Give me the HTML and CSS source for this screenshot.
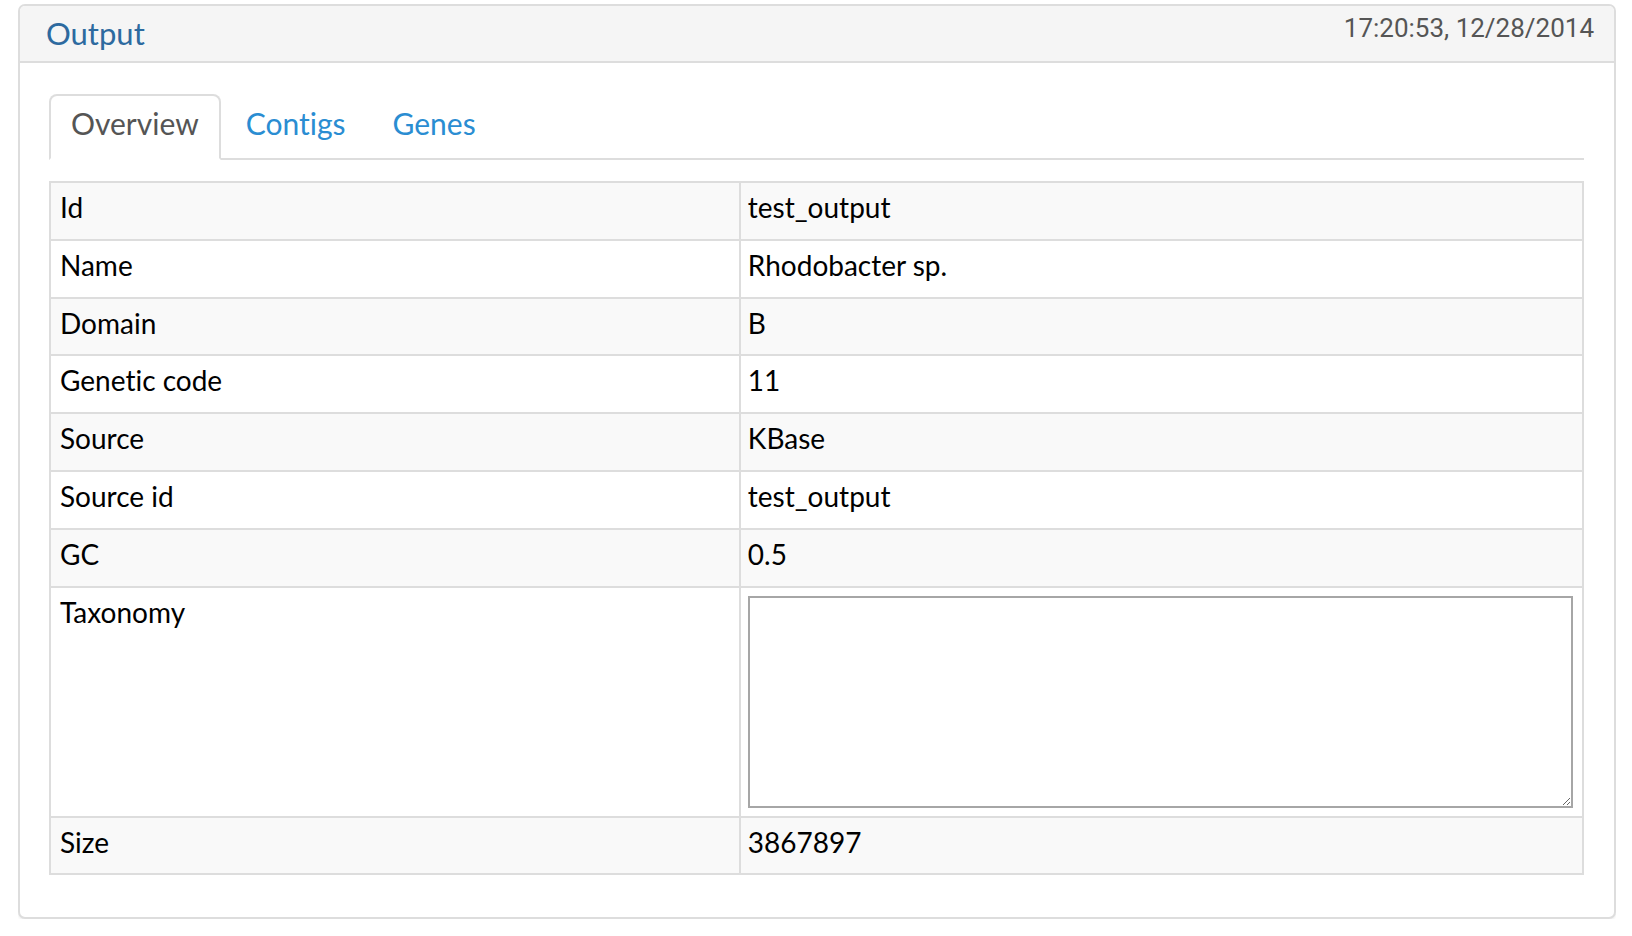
FILE: index.html
```html
<!DOCTYPE html>
<html lang="en">
<head>
<meta charset="utf-8">
<title>Output</title>
<link rel="stylesheet" href="styles.css">
</head>
<body>
<div class="panel">
  <div class="panel-heading">
    <div class="panel-title">Output</div>
    <div class="timestamp">17:20:53, 12/28/2014</div>
  </div>
  <div class="panel-body">
    <ul class="tabs">
      <li class="tab active"><a>Overview</a></li>
      <li class="tab"><a>Contigs</a></li>
      <li class="tab"><a>Genes</a></li>
    </ul>
    <table class="info">
      <colgroup><col class="col-label"><col class="col-value"></colgroup>
      <tbody>
        <tr><td>Id</td><td>test_output</td></tr>
        <tr><td>Name</td><td>Rhodobacter sp.</td></tr>
        <tr><td>Domain</td><td>B</td></tr>
        <tr><td>Genetic code</td><td>11</td></tr>
        <tr><td>Source</td><td>KBase</td></tr>
        <tr><td>Source id</td><td>test_output</td></tr>
        <tr><td>GC</td><td>0.5</td></tr>
        <tr><td>Taxonomy</td><td class="cell-area"><textarea class="taxonomy"></textarea></td></tr>
        <tr><td>Size</td><td>3867897</td></tr>
      </tbody>
    </table>
  </div>
</div>
</body>
</html>
```

FILE: styles.css
```css
html, body {
  background: #ffffff;
}
body {
  margin: 4px 16px 0 18px;
  font-family: Lato, "Open Sans", sans-serif;
  font-variant-ligatures: none;
  color: #000;
}
.panel {
  border: 2px solid #dddddd;
  border-radius: 7px;
  background: #fff;
  box-shadow: 0 2px 2px rgba(0, 0, 0, 0.05);
  overflow: hidden;
}
.panel-heading {
  display: flex;
  justify-content: space-between;
  align-items: flex-start;
  background: #f5f5f5;
  border-bottom: 2px solid #dddddd;
  padding: 7px 20px 8px 26px;
}
.panel-title {
  font-family: Lato, sans-serif;
  font-size: 31px;
  line-height: 40px;
  color: #2d6a9f;
}
.timestamp {
  font-family: Roboto, sans-serif;
  font-size: 26px;
  line-height: 30px;
  color: #555555;
}
.panel-body {
  padding: 31px 30px 42px 29px;
}
.tabs {
  list-style: none;
  margin: 0 0 21px 0;
  padding: 0;
  display: flex;
  border-bottom: 2px solid #dddddd;
}
.tab {
  margin: 0 3px -2px 0;
}
.tab a {
  display: block;
  padding: 7px 20px 14px 20px;
  line-height: 41px;
  font-size: 30px;
  color: #2a8dd2;
  border: 2px solid transparent;
  border-radius: 8px 8px 0 0;
}
.tab.active a {
  color: #555555;
  background: #fff;
  border-color: #dddddd #dddddd transparent #dddddd;
}
.info {
  width: 100%;
  table-layout: fixed;
  border-collapse: separate;
  border-spacing: 0;
  border-top: 2px solid #dddddd;
  border-left: 2px solid #dddddd;
  font-size: 28px;
}
.col-label {
  width: 45%;
}
.info td {
  border-right: 2px solid #dddddd;
  border-bottom: 2px solid #dddddd;
  padding: 9px 9px 16.8px 9px;
  line-height: 30px;
  vertical-align: top;
}
.info td + td {
  padding-left: 7px;
}
.info tr:nth-child(odd) td {
  background: #f9f9f9;
}
.info td.cell-area {
  padding: 8px 9px 8px 7px;
}
.taxonomy {
  display: block;
  width: 100%;
  height: 212px;
  box-sizing: border-box;
  margin: 0;
  border: 2px solid #a6a6a6;
  background: #fff;
  font-family: Lato, sans-serif;
}
```
